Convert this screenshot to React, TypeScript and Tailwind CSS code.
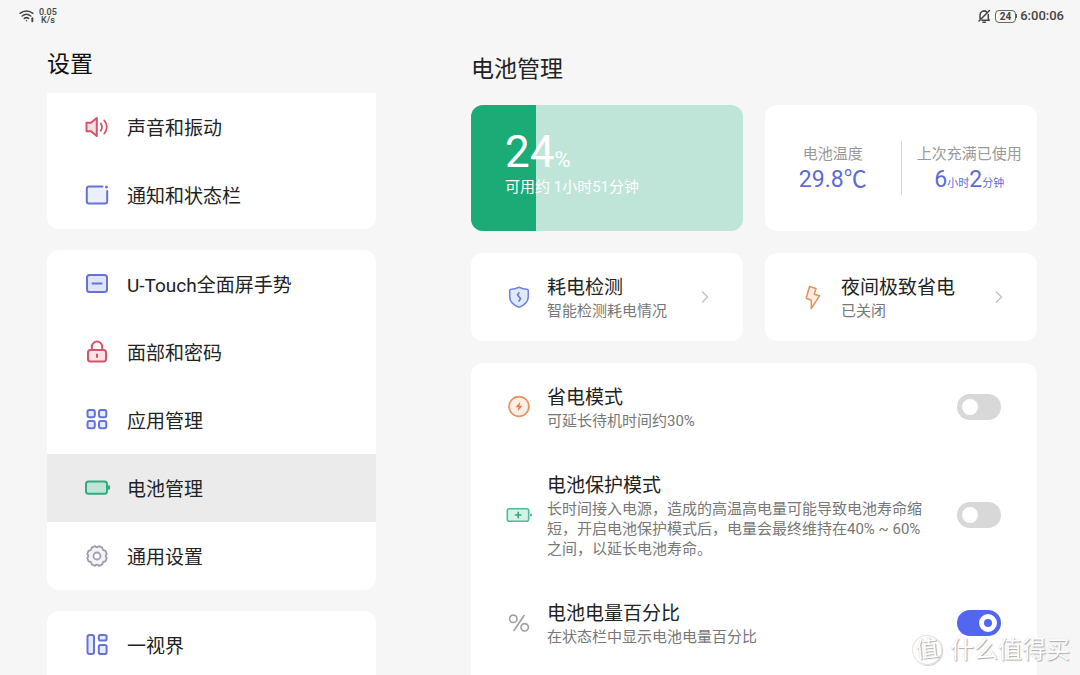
import { useState, type ReactNode } from "react";

const BLUE = "#6672d6";
const RED = "#d4546c";

function Icon({ children }: { children: ReactNode }) {
  return (
    <svg
      viewBox="0 0 28 28"
      className="w-7 h-7 shrink-0"
      fill="none"
      strokeWidth="2"
      strokeLinecap="round"
      strokeLinejoin="round"
      aria-hidden="true"
    >
      {children}
    </svg>
  );
}

const soundIcon = (
  <Icon>
    <path d="M3.500 9.800H8L13.800 5v18L8 18.200H3.500z" stroke={RED} fill="#f9dfe4" />
    <path d="M17.800 10.500c1.300 2 1.300 5 0 7.200M21.300 7.500c3.300 3.800 3.300 9.200 0 13" stroke={RED} strokeWidth="1.800" />
  </Icon>
);

const noticeIcon = (
  <Icon>
    <path d="M19.500 5.500H6A2.200 2.200 0 0 0 3.800 7.700v12.600A2.200 2.200 0 0 0 6 22.500h16a2.200 2.200 0 0 0 2.200-2.200V10" stroke={BLUE} fill="#eaf0ff" />
    <circle cx="23.500" cy="6" r="1.500" fill={BLUE} />
  </Icon>
);

const gestureIcon = (
  <Icon>
    <rect x="4" y="5" width="20" height="17" rx="2.500" stroke={BLUE} fill="#dfe5ff" />
    <path d="M9.500 13.500h9" stroke={BLUE} />
  </Icon>
);

const lockIcon = (
  <Icon>
    <path d="M8.800 12V8.800a5.200 5.200 0 0 1 10.400 0V12" stroke={RED} />
    <rect x="5" y="12" width="18" height="11.500" rx="2.500" stroke={RED} fill="#fbe3e6" />
    <path d="M14 16.500v2.400" stroke={RED} />
  </Icon>
);

const appsIcon = (
  <Icon>
    <g stroke={BLUE} fill="#e6ebff">
      <rect x="4.500" y="4" width="7.300" height="7.300" rx="2" />
      <rect x="16" y="4" width="7.300" height="7.300" rx="2" />
      <rect x="4.500" y="15" width="7.300" height="7.300" rx="2" />
      <rect x="16" y="15" width="7.300" height="7.300" rx="2" />
    </g>
  </Icon>
);

const batteryIcon = (
  <Icon>
    <rect x="3" y="7.500" width="21" height="12.200" rx="2.500" stroke="#31ab80" fill="#bfe5d6" />
    <path d="M26 12.300v2.400" stroke="#31ab80" strokeWidth="2.200" />
  </Icon>
);

const gearIcon = (
  <Icon>
    <path
      d="M12 4.200Q14 6.400 16 4.200L19.400 5.600Q19.300 8.700 22.400 8.600L23.800 12Q21.600 14 23.800 16L22.400 19.400Q19.300 19.300 19.400 22.400L16 23.800Q14 21.600 12 23.800L8.600 22.400Q8.700 19.300 5.600 19.400L4.200 16Q6.400 14 4.200 12L5.600 8.600Q8.700 8.700 8.600 5.600Z"
      stroke="#9f9fab"
      fill="#f3f3f9"
      strokeWidth="1.800"
    />
    <circle cx="14" cy="14" r="3.500" stroke="#9f9fab" fill="#fff" strokeWidth="1.800" />
  </Icon>
);

const viewIcon = (
  <Icon>
    <g stroke={BLUE} fill="#e6ebff">
      <rect x="4.500" y="4" width="6.500" height="19" rx="2" />
      <rect x="15.800" y="4" width="7.800" height="5.600" rx="1.800" />
      <rect x="15.800" y="14" width="7.800" height="9" rx="1.800" />
    </g>
  </Icon>
);

const shieldIcon = (
  <Icon>
    <path d="M14 4.300Q18.500 6.300 22 6.200Q23.300 6.300 23.300 7.600V13.500C23.300 19.200 18.600 22.600 14 24.200C9.400 22.600 4.700 19.200 4.700 13.500V7.600Q4.700 6.300 6 6.200Q9.500 6.300 14 4.300Z" stroke="#7382d9" fill="#e0e9fd" strokeWidth="1.600" />
    <path d="M14 9.800l-1.500 2.200 3 3.500-1.500 2.500" stroke="#6678d8" strokeWidth="1.600" />
  </Icon>
);

const nightIcon = (
  <Icon>
    <path d="M10.500 3.500L17 5.500L15.300 11.300L20.500 12.800L12.300 25.500L12.300 17.300L7.200 15.300Z" stroke="#e2925f" fill="#fdece0" strokeWidth="1.500" />
  </Icon>
);

const saverIcon = (
  <Icon>
    <circle cx="14" cy="13.500" r="9.900" stroke="#e29264" fill="#feeee3" strokeWidth="1.700" />
    <path d="M15.200 8.800l-4.600 5.500h2.900l-.8 4.200 4.700-5.800h-2.900z" fill="#e47d48" />
  </Icon>
);

const protectIcon = (
  <Icon>
    <rect x="2.300" y="7.800" width="21.400" height="12.400" rx="2" stroke="#53bb93" fill="#d2f3e6" strokeWidth="1.600" />
    <path d="M10.500 14h5.400M13.200 11.300v5.400" stroke="#3aa67b" strokeWidth="1.600" />
    <path d="M26 13.500v1" stroke="#53bb93" />
  </Icon>
);

const percentIcon = (
  <Icon>
    <g stroke="#a0a0a0" strokeWidth="1.600">
      <circle cx="8.300" cy="9.800" r="3.700" />
      <circle cx="19.700" cy="18.300" r="3.700" />
      <path d="M19 6.500L9 21.500" />
    </g>
  </Icon>
);

const menu = [
  [
    { label: "声音和振动", icon: soundIcon },
    { label: "通知和状态栏", icon: noticeIcon },
  ],
  [
    { label: "U-Touch全面屏手势", icon: gestureIcon },
    { label: "面部和密码", icon: lockIcon },
    { label: "应用管理", icon: appsIcon },
    { label: "电池管理", icon: batteryIcon },
    { label: "通用设置", icon: gearIcon },
  ],
  [{ label: "一视界", icon: viewIcon }],
];

const options = [
  { id: "saver", title: "省电模式", desc: "可延长待机时间约30%", icon: saverIcon, on: false },
  {
    id: "protect",
    title: "电池保护模式",
    desc: "长时间接入电源，造成的高温高电量可能导致电池寿命缩短，开启电池保护模式后，电量会最终维持在40% ~ 60%之间，以延长电池寿命。",
    icon: protectIcon,
    on: false,
  },
  { id: "percent", title: "电池电量百分比", desc: "在状态栏中显示电池电量百分比", icon: percentIcon, on: true },
];

function StatusBar() {
  return (
    <header className="flex h-8 shrink-0 items-center justify-between pl-[19px] pr-4 text-[#444]">
      <div className="flex items-center gap-1">
        <svg viewBox="0 0 15 14" className="w-4 h-4" fill="none" stroke="#444" strokeWidth="1.400" strokeLinecap="round" aria-hidden="true">
          <path d="M1 4.500c3.500-3 8.500-3 12 0M3 7c2.500-2 5.500-2 8 0M5 9.300c1.300-1 2.700-1 4 0" />
          <circle cx="7" cy="11.500" r=".7" fill="#444" stroke="none" />
          <path d="M12.500 9v3" strokeWidth="1.800" />
        </svg>
        <div className="text-center text-[9px] leading-[8px] font-medium">
          <div>0.05</div>
          <div>K/s</div>
        </div>
      </div>
      <div className="flex items-center gap-[3px]">
        <svg viewBox="0 0 16 16" className="w-4 h-4" fill="none" stroke="#444" strokeWidth="1.500" strokeLinecap="round" strokeLinejoin="round" aria-hidden="true">
          <path d="M4 10.500V7a4 4 0 0 1 6.500-3.200M12.300 6.500V11l1 1.200H6M7 14.200h2.500M13.500 2.500L3 13" />
        </svg>
        <div className="flex items-center">
          <span className="rounded border border-[#666] px-1 text-[10px] leading-[11px] font-bold">24</span>
          <span className="h-1 w-px bg-[#555]" />
        </div>
        <time className="text-[13px] leading-4 font-medium">6:00:06</time>
      </div>
    </header>
  );
}

function Chevron() {
  return (
    <svg viewBox="0 0 12 16" className="w-3 h-4 shrink-0" fill="none" stroke="#c4c4c4" strokeWidth="1.500" aria-hidden="true">
      <path d="M3 2.500L8.500 8L3 13.500" />
    </svg>
  );
}

function LinkCard({ icon, title, desc }: { icon: ReactNode; title: string; desc: string }) {
  return (
    <button className="flex h-[88px] items-center gap-[14px] rounded-xl bg-white pl-[34px] pr-8 text-left">
      {icon}
      <span className="flex-1 pt-[2px]">
        <span className="block text-[19px] leading-[26px] text-[#222]">{title}</span>
        <span className="block text-[15px] leading-5 text-[#777]">{desc}</span>
      </span>
      <Chevron />
    </button>
  );
}

function Option({ option }: { option: (typeof options)[number] }) {
  const [on, setOn] = useState(option.on);

  return (
    <div className="flex items-center gap-[14px] py-5 pl-[34px] pr-9">
      {option.icon}
      <label htmlFor={option.id} className="flex-1 pt-[2px]">
        <span className="block text-[19px] leading-[26px] text-[#222]">{option.title}</span>
        <span className="block max-w-[380px] text-[15px] leading-5 text-[#777]">{option.desc}</span>
      </label>
      <input
        id={option.id}
        type="checkbox"
        role="switch"
        checked={on}
        onChange={(e) => setOn(e.target.checked)}
        className="flex h-[26px] w-11 shrink-0 appearance-none items-center rounded-full bg-[#d8d8d8] px-[5px] before:size-4 before:rounded-full before:bg-white checked:justify-end checked:bg-[#5266f0] checked:px-1 checked:before:size-[18px] checked:before:border-[5px] checked:before:border-white checked:before:bg-[#5266f0]"
      />
    </div>
  );
}

export default function App() {
  return (
    <div className="relative flex h-screen flex-col overflow-hidden bg-[#f6f6f6] font-['Roboto','Noto_Sans_CJK_SC',sans-serif] text-[#222]">
      <StatusBar />

      <div className="flex min-h-0 flex-1 gap-[95px] pl-[47px] pr-[43px]">
        <aside className="flex w-[329px] shrink-0 flex-col">
          <h1 className="pt-[17px] pb-3 text-[23px] leading-8 text-[#111]">设置</h1>
          <nav className="flex flex-1 flex-col gap-[21px]">
            {menu.map((group, i) => (
              <ul key={i} className="shrink-0 overflow-hidden rounded-xl bg-white first:rounded-t-none last:grow last:rounded-b-none">
                {group.map((item) => (
                  <li key={item.label}>
                    <a
                      href="#"
                      aria-current={item.label === "电池管理" ? "page" : undefined}
                      className="flex h-[68px] items-center gap-4 pl-9 text-[19px] leading-7 aria-[current=page]:bg-[#ebebeb]"
                    >
                      {item.icon}
                      <span className="pt-[3px]">{item.label}</span>
                    </a>
                  </li>
                ))}
              </ul>
            ))}
          </nav>
        </aside>

        <main className="flex min-w-0 flex-1 flex-col">
          <h2 className="pt-[22px] pb-[19px] text-[23px] leading-8 text-[#222]">电池管理</h2>

          <div className="grid shrink-0 grid-cols-2 gap-[22px]">
            <section className="relative h-[126px] overflow-hidden rounded-xl bg-[#bee5d7]">
              <div className="h-full bg-[#1bab76]" style={{ width: "24%" }} />
              <div className="absolute inset-0 pt-6 pl-[34px] text-white">
                <div className="text-[44px] leading-[46px]">
                  24<span className="text-[22px] leading-none">%</span>
                </div>
                <div className="text-[15px] leading-6">可用约 1小时51分钟</div>
              </div>
            </section>

            <section className="flex items-center rounded-xl bg-white text-center">
              <div className="flex-1">
                <div className="text-[15px] leading-6 text-[#999]">电池温度</div>
                <div className="text-[23px] leading-7 text-[#5d6bd6]">29.8℃</div>
              </div>
              <div className="h-[54px] w-px bg-[#d4d4d4]" />
              <div className="flex-1">
                <div className="text-[15px] leading-6 text-[#999]">上次充满已使用</div>
                <div className="text-[23px] leading-7 text-[#5d6bd6]">
                  6<span className="text-[11px] leading-none">小时</span>2<span className="text-[11px] leading-none">分钟</span>
                </div>
              </div>
            </section>

            <LinkCard icon={shieldIcon} title="耗电检测" desc="智能检测耗电情况" />
            <LinkCard icon={nightIcon} title="夜间极致省电" desc="已关闭" />
          </div>

          <section className="mt-[22px] flex-1 rounded-t-xl bg-white">
            {options.map((option) => (
              <Option key={option.id} option={option} />
            ))}
          </section>
        </main>
      </div>

      <div className="pointer-events-none absolute right-[10px] bottom-[9px] flex items-center gap-2 text-white [text-shadow:1px_1px_1px_#aaa,0_0_1px_#ccc]">
        <span className="flex size-[30px] items-center justify-center rounded-full border border-[#e4e4e4] text-[23px] leading-8 shadow-[1px_1px_1px_#ccc] -rotate-6">
          值
        </span>
        <span className="text-[24px] leading-8">什么值得买</span>
      </div>
    </div>
  );
}
